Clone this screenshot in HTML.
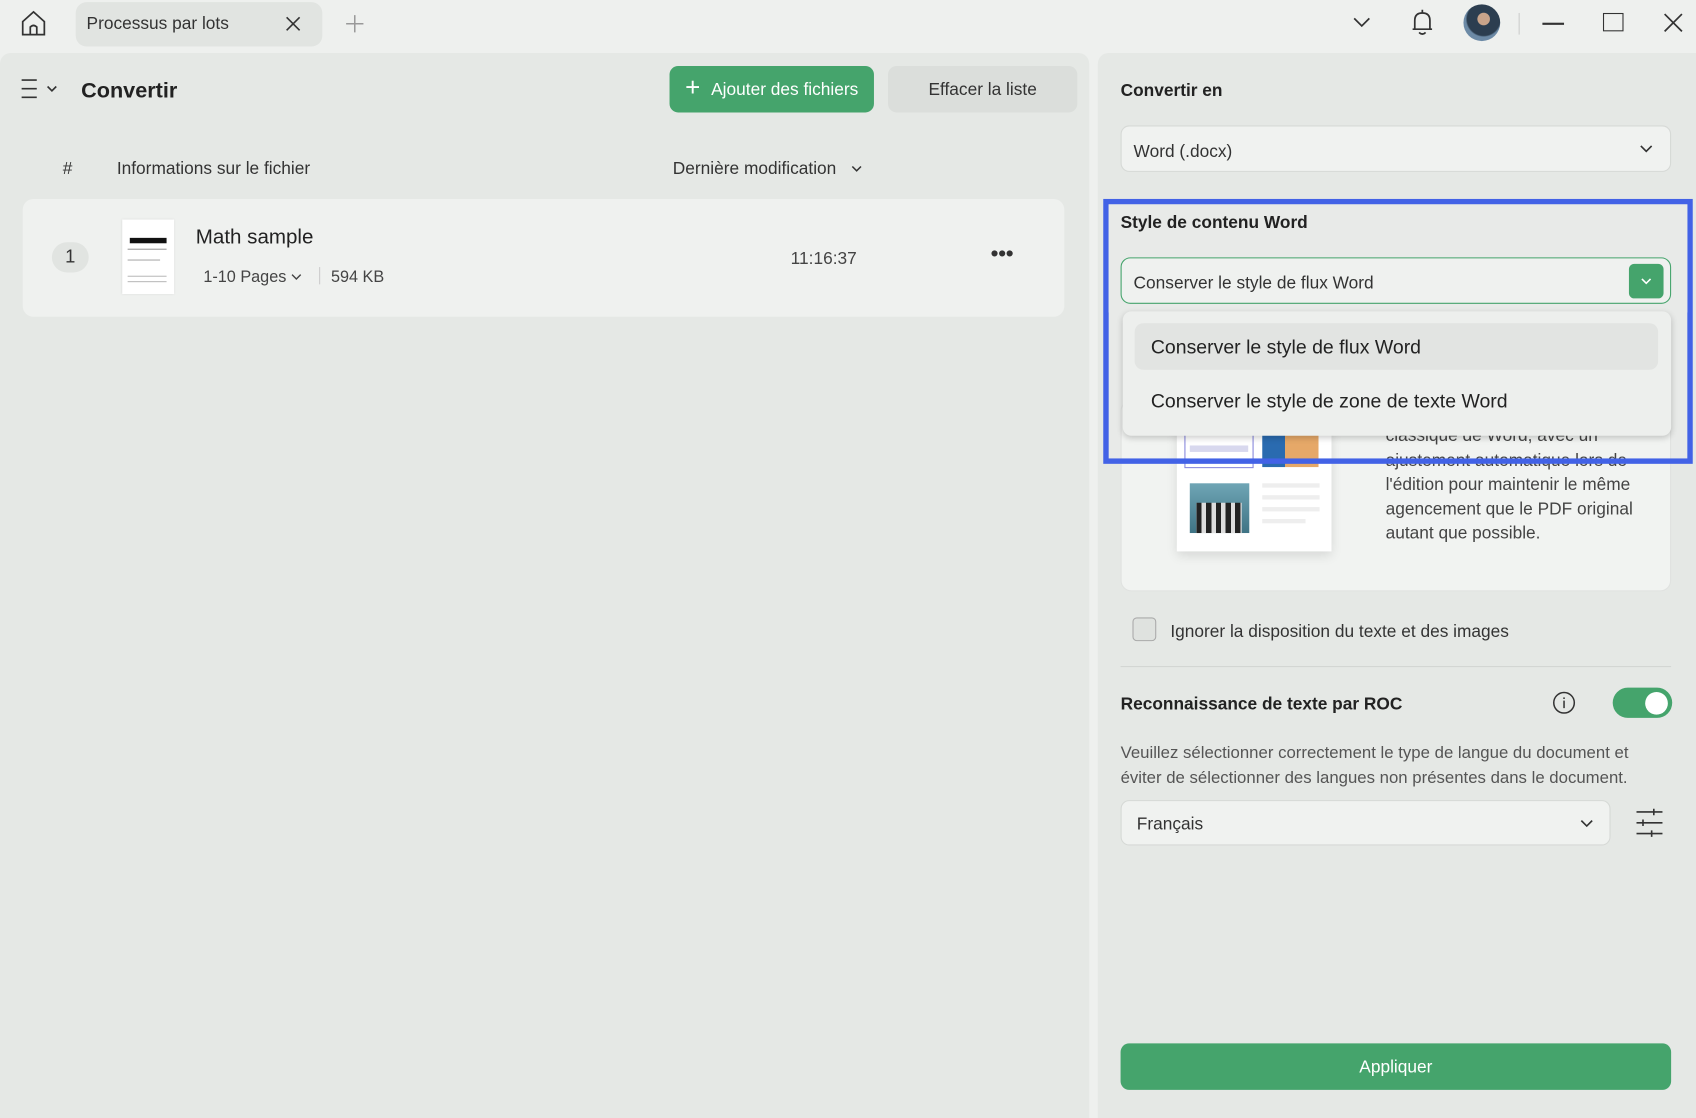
<!DOCTYPE html>
<html><head><meta charset="utf-8"><style>
*{box-sizing:border-box;margin:0;padding:0}
html,body{width:1696px;height:1118px;overflow:hidden;background:#eef0ee;font-family:"Liberation Sans",sans-serif;color:#222}
#w{position:absolute;left:0;top:0;width:1568px;height:1034px;transform:scale(1.08163,1.0812);transform-origin:0 0}
.a{position:absolute}
.t{position:absolute;white-space:nowrap;line-height:1}
.btn{position:absolute;border-radius:8px;display:flex;align-items:center;justify-content:center;font-size:16px}
</style></head><body><div id="w">
<svg class="a" style="left:17px;top:8px" width="28" height="28" viewBox="0 0 28 28" fill="none" stroke="#333" stroke-width="1.6"><path d="M4 12 L14 3 L24 12 V24 H4 Z"/><path d="M11 24 V17 Q14 14 17 17 V24"/></svg>
<div class="a" style="left:70px;top:2px;width:228px;height:41px;background:#e1e4e1;border-radius:10px"></div>
<div class="t" style="left:80px;top:15px;font-size:16px;color:#333">Processus par lots</div>
<svg class="a" style="left:263px;top:14px" width="16" height="16" stroke="#333" stroke-width="1.5"><path d="M2 2L14 14M14 2L2 14"/></svg>
<svg class="a" style="left:319px;top:13px" width="18" height="18" stroke="#999" stroke-width="1.4"><path d="M9 1V17M1 9H17"/></svg>
<svg class="a" style="left:1250px;top:14px" width="18" height="14" fill="none" stroke="#333" stroke-width="1.6"><path d="M2 3L9 10L16 3"/></svg>
<svg class="a" style="left:1303px;top:7px" width="24" height="28" fill="none" stroke="#333" stroke-width="1.6"><path d="M5 20V12Q5 5 12 5Q19 5 19 12V20H21H3Z"/><path d="M12 2V5M9 23Q12 26 15 23"/></svg>
<div class="a" style="left:1353px;top:4px;width:34px;height:34px;border-radius:50%;background:radial-gradient(circle at 55% 40%,#c9a48a 0 20%,#2c3e50 22% 55%,#6c8aa6 60%)"></div>
<div class="a" style="left:1404px;top:12px;width:1px;height:20px;background:#ccc"></div>
<div class="a" style="left:1426px;top:21px;width:20px;height:1.5px;background:#333"></div>
<div class="a" style="left:1482px;top:12px;width:19px;height:17px;border:1.6px solid #333"></div>
<svg class="a" style="left:1538px;top:12px" width="18" height="18" stroke="#333" stroke-width="1.6"><path d="M1 1L17 17M17 1L1 17"/></svg>

<div class="a" style="left:0;top:49px;width:1007px;height:985px;background:#e5e8e5;border-radius:10px 10px 0 0"></div>
<svg class="a" style="left:18px;top:72px" width="38" height="22" fill="none" stroke="#333" stroke-width="1.5"><path d="M2 2H16M2 10H16M2 18H16"/><path d="M26 8L30 12L34 8"/></svg>
<div class="t" style="left:75px;top:74px;font-size:20px;font-weight:bold;color:#222">Convertir</div>
<div class="btn" style="left:619px;top:61px;width:189px;height:43px;background:#45a46c;color:#fff;padding-top:3px"><span style="font-size:24px;font-weight:300;margin-right:10px;margin-top:-4px">+</span>Ajouter des fichiers</div>
<div class="btn" style="left:821px;top:61px;width:175px;height:43px;background:#dbdedb;color:#333;padding-top:3px">Effacer la liste</div>
<div class="t" style="left:58px;top:149px;font-size:16px;color:#333">#</div>
<div class="t" style="left:108px;top:149px;font-size:16px;color:#333">Informations sur le fichier</div>
<div class="t" style="left:622px;top:149px;font-size:16px;color:#333">Dernière modification</div>
<svg class="a" style="left:787px;top:152px" width="10" height="8" fill="none" stroke="#333" stroke-width="1.4"><path d="M1 2L5 6L9 2"/></svg>
<div class="a" style="left:21px;top:184px;width:963px;height:109px;background:#eff1ef;border-radius:10px"></div>
<div class="a" style="left:48px;top:224px;width:34px;height:28px;background:#e1e4e1;border-radius:14px;font-size:17px;text-align:center;line-height:28px;color:#333">1</div>
<div class="a" style="left:113px;top:203px;width:48px;height:69px;background:#fff;box-shadow:0 0 2px #ccc"></div>
<div class="a" style="left:120px;top:220px;width:34px;height:5px;background:#111"></div>
<div class="a" style="left:118px;top:230px;width:36px;height:1px;background:#999"></div>
<div class="a" style="left:118px;top:240px;width:30px;height:1px;background:#aaa"></div>
<div class="a" style="left:118px;top:255px;width:36px;height:6px;border-top:1px solid #bbb;border-bottom:1px solid #bbb"></div>
<div class="t" style="left:181px;top:210px;font-size:19px;color:#222">Math sample</div>
<div class="t" style="left:188px;top:249px;font-size:15px;color:#444">1-10 Pages</div>
<svg class="a" style="left:269px;top:252px" width="10" height="8" fill="none" stroke="#444" stroke-width="1.3"><path d="M1 2L5 6L9 2"/></svg>
<div class="a" style="left:295px;top:247px;width:1px;height:16px;background:#ccc"></div>
<div class="t" style="left:306px;top:249px;font-size:15px;color:#444">594 KB</div>
<div class="t" style="left:731px;top:232px;font-size:16px;color:#444">11:16:37</div>
<div class="t" style="left:916px;top:225px;font-size:20px;font-weight:bold;letter-spacing:0px;color:#333">•••</div>

<div class="a" style="left:1015px;top:49px;width:553px;height:985px;background:#e5e8e5;border-radius:10px 0 0 0"></div>
<div class="t" style="left:1036px;top:77px;font-size:16px;font-weight:bold">Convertir en</div>
<div class="a" style="left:1036px;top:116px;width:509px;height:43px;background:#f0f2f0;border:1px solid #d6d9d6;border-radius:8px"></div>
<div class="t" style="left:1048px;top:133px;font-size:16px;color:#333">Word (.docx)</div>
<svg class="a" style="left:1516px;top:133px" width="12" height="9" fill="none" stroke="#333" stroke-width="1.5"><path d="M1 2L6 7L11 2"/></svg>

<div class="a" style="left:1020px;top:184px;width:545px;height:245px;background:#e8eae8"></div>
<div class="a" style="left:1036px;top:370px;width:509px;height:177px;background:#f1f3f1;border:1px solid #e0e2e0;border-radius:10px"></div>
<div class="a" style="left:1088px;top:392px;width:143px;height:118px;background:#fff;box-shadow:0 4px 10px rgba(0,0,0,.12)"></div>
<div class="a" style="left:1095px;top:398px;width:64px;height:35px;border:1px solid #8888dd"></div>
<div class="a" style="left:1100px;top:412px;width:54px;height:6px;background:#d8d8ee"></div>
<div class="a" style="left:1167px;top:398px;width:52px;height:34px;background:linear-gradient(90deg,#2a6bb0 0 40%,#e6a868 40%)"></div>
<div class="a" style="left:1100px;top:447px;width:55px;height:46px;background:linear-gradient(#6fa5b5,#3f7485)"></div>
<div class="a" style="left:1106px;top:465px;width:42px;height:28px;background:repeating-linear-gradient(90deg,#222 0 5px,#ddd 5px 9px)"></div>
<div class="a" style="left:1167px;top:447px;width:53px;height:4px;background:#eee;box-shadow:0 11px #eee,0 22px #eee"></div>
<div class="a" style="left:1167px;top:480px;width:40px;height:4px;background:#eee"></div>
<div class="t" style="left:1281px;top:393px;font-size:16px;color:#444;line-height:22.5px">classique de Word, avec un<br>ajustement automatique lors de<br>l'édition pour maintenir le même<br>agencement que le PDF original<br>autant que possible.</div>

<div class="a" style="left:1020px;top:184px;width:545px;height:245px;border:5px solid #4262e6"></div>
<div class="a" style="left:1025px;top:189px;width:535px;height:100px;background:#e8eae8"></div>
<div class="t" style="left:1036px;top:199px;font-size:16px;font-weight:bold">Style de contenu Word</div>
<div class="a" style="left:1036px;top:238px;width:509px;height:43px;background:#eff1ef;border:1px solid #45a46c;border-radius:9px"></div>
<div class="t" style="left:1048px;top:255px;font-size:16px;color:#333">Conserver le style de flux Word</div>
<div class="a" style="left:1506px;top:244px;width:32px;height:32px;background:#45a46c;border-radius:5px"></div>
<svg class="a" style="left:1517px;top:256px" width="10" height="8" fill="none" stroke="#fff" stroke-width="1.5"><path d="M1 2L5 6L9 2"/></svg>
<div class="a" style="left:1038px;top:288px;width:507px;height:115px;background:#edefed;border-radius:8px;box-shadow:0 2px 6px rgba(0,0,0,.2)"></div>
<div class="a" style="left:1049px;top:299px;width:484px;height:43px;background:#e2e4e2;border-radius:8px"></div>
<div class="t" style="left:1064px;top:312px;font-size:18px;color:#222">Conserver le style de flux Word</div>
<div class="t" style="left:1064px;top:362px;font-size:18px;color:#222">Conserver le style de zone de texte Word</div>

<div class="a" style="left:1047px;top:571px;width:22px;height:22px;border:1.5px solid #aaa;border-radius:4px;background:#dfe2df"></div>
<div class="t" style="left:1082px;top:577px;font-size:16px;color:#333">Ignorer la disposition du texte et des images</div>
<div class="a" style="left:1036px;top:616px;width:509px;height:1px;background:#d3d6d3"></div>
<div class="t" style="left:1036px;top:644px;font-size:16px;font-weight:bold">Reconnaissance de texte par ROC</div>
<svg class="a" style="left:1435px;top:639px" width="22" height="22" fill="none" stroke="#333" stroke-width="1.4"><circle cx="11" cy="11" r="9.5"/><path d="M11 9V16M11 6V7.5"/></svg>
<div class="a" style="left:1491px;top:636px;width:55px;height:28px;background:#45a46c;border-radius:14px"></div>
<div class="a" style="left:1521px;top:640px;width:21px;height:21px;background:#fff;border-radius:50%"></div>
<div class="t" style="left:1036px;top:686px;font-size:15.5px;color:#555;line-height:22.5px">Veuillez sélectionner correctement le type de langue du document et<br>éviter de sélectionner des langues non présentes dans le document.</div>
<div class="a" style="left:1036px;top:740px;width:453px;height:42px;background:#f0f2f0;border:1px solid #d6d9d6;border-radius:8px"></div>
<div class="t" style="left:1051px;top:755px;font-size:16px;color:#333">Français</div>
<svg class="a" style="left:1461px;top:757px" width="12" height="9" fill="none" stroke="#333" stroke-width="1.5"><path d="M1 2L6 7L11 2"/></svg>
<svg class="a" style="left:1512px;top:747px" width="26" height="28" fill="none" stroke="#333" stroke-width="1.5"><path d="M1 4H25M1 14H25M1 24H25"/><path d="M17 1V7M7 11V17M15 21V27"/></svg>
<div class="btn" style="left:1036px;top:965px;width:509px;height:43px;background:#45a46c;color:#fff;padding-top:3px">Appliquer</div>
</div></body></html>
